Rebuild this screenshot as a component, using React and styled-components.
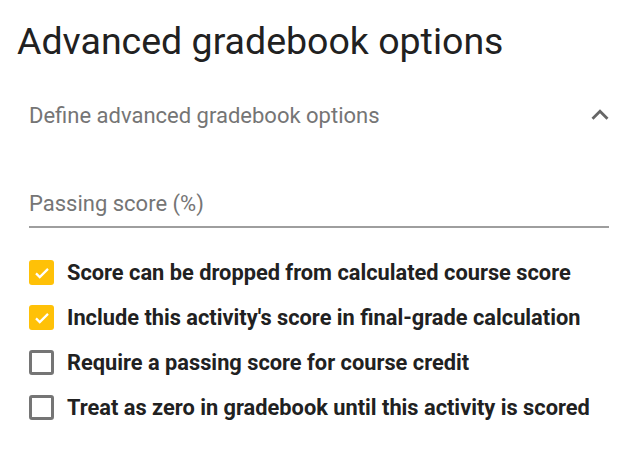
import styled, { createGlobalStyle } from 'styled-components';

const GlobalStyle = createGlobalStyle`
  body {
    margin: 0;
    background: #fff;
    font-family: Roboto, "Liberation Sans", sans-serif;
  }
`;

//Styles
const Page = styled.div`
  width: 630px;
  padding: 19px 21px 0 17px;
  box-sizing: border-box;
`;

const Title = styled.h1`
  margin: 0;
  font-size: 37.5px;
  line-height: 44px;
  font-weight: 400;
  color: #212121;
`;

const Section = styled.div`
  padding-left: 12px;
`;

const Header = styled.div`
  display: flex;
  align-items: center;
  justify-content: space-between;
  margin-top: 38px;
  height: 28px;
`;

const Subtitle = styled.span`
  font-size: 22px;
  color: #757575;
`;

const Chevron = styled.svg`
  width: 34px;
  height: 34px;
  margin-right: -8px;
  fill: #666;
`;

const Field = styled.div`
  margin-top: 62px;
  border-bottom: 2px solid #9e9e9e;
  padding-bottom: 9px;
  font-size: 22px;
  line-height: 26px;
  color: #757575;
`;

const List = styled.div`
  display: flex;
  flex-direction: column;
  gap: 20px;
  margin-top: 32px;
`;

const Row = styled.label`
  display: flex;
  align-items: center;
  gap: 13px;
  height: 25px;
  font-size: 21.8px;
  font-weight: 700;
  color: #212121;
`;

const Box = styled.span`
  width: 25px;
  height: 25px;
  flex-shrink: 0;
  box-sizing: border-box;
  border-radius: 3px;
  display: flex;
  align-items: center;
  justify-content: center;
  background: ${(p) => (p.checked ? '#ffc107' : '#fff')};
  border: ${(p) => (p.checked ? 'none' : '3px solid #757575')};
`;

const options = [
  { label: 'Score can be dropped from calculated course score', checked: true },
  { label: "Include this activity's score in final-grade calculation", checked: true },
  { label: 'Require a passing score for course credit', checked: false },
  { label: 'Treat as zero in gradebook until this activity is scored', checked: false },
];

const App = () => {
  return (
    <>
      <GlobalStyle />
      <Page>
        <Title>Advanced gradebook options</Title>
        <Section>
          <Header>
            <Subtitle>Define advanced gradebook options</Subtitle>
            <Chevron viewBox='0 0 24 24'>
              <path d='M12 8l-6 6 1.41 1.41L12 10.83l4.59 4.58L18 14z' />
            </Chevron>
          </Header>
          <Field>Passing score (%)</Field>
          <List>
            {options.map((o) => (
              <Row key={o.label}>
                <Box checked={o.checked}>
                  {o.checked ? (
                    <svg width='18' height='18' viewBox='0 0 24 24'>
                      <path d='M4 12.5l5 5L20 6.5' fill='none' stroke='#fff' strokeWidth='3' />
                    </svg>
                  ) : null}
                </Box>
                {o.label}
              </Row>
            ))}
          </List>
        </Section>
      </Page>
    </>
  );
};

export default App;
